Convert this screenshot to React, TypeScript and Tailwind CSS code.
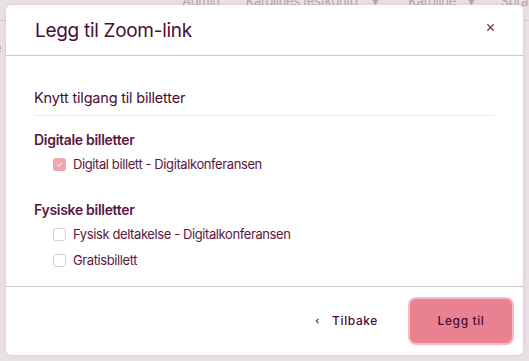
import React, { useState } from "react";

const font = { fontFamily: "Inter, 'Noto Sans', sans-serif" };

interface TicketOption {
  id: string;
  label: string;
}

const digital: TicketOption[] = [
  { id: "d1", label: "Digital billett - Digitalkonferansen" },
];

const physical: TicketOption[] = [
  { id: "p1", label: "Fysisk deltakelse - Digitalkonferansen" },
  { id: "p2", label: "Gratisbillett" },
];

const Check = ({ checked, onClick }: { checked: boolean; onClick: () => void }) => (
  <button
    onClick={onClick}
    className={
      checked
        ? "flex h-[13px] w-[13px] items-center justify-center rounded-[3px] bg-[#f3a3ad]"
        : "h-[13px] w-[13px] rounded-[3px] border border-[#d9cdd3] bg-white"
    }
  >
    {checked && (
      <svg viewBox="0 0 12 12" className="h-[9px] w-[9px]">
        <path d="M2.5 6.2 L5 8.5 L9.5 3.5" fill="none" stroke="white" strokeWidth="1.3" />
      </svg>
    )}
  </button>
);

const Group = ({
  title,
  items,
  selected,
  toggle,
}: {
  title: string;
  items: TicketOption[];
  selected: string[];
  toggle: (id: string) => void;
}) => (
  <div>
    <div className="text-[14px] font-semibold leading-[20px] tracking-[-0.3px] text-[#5a1840]">{title}</div>
    <div className="mt-[5px] flex flex-col gap-[6px] pl-[19px]">
      {items.map((t) => (
        <label key={t.id} className="flex h-[20px] items-center gap-[7px]">
          <Check checked={selected.includes(t.id)} onClick={() => toggle(t.id)} />
          <span className="text-[13px] tracking-[-0.4px] text-[#5a1840]">{t.label}</span>
        </label>
      ))}
    </div>
  </div>
);

export default function App() {
  const [selected, setSelected] = useState<string[]>(["d1"]);

  const toggle = (id: string) =>
    setSelected((s) => (s.includes(id) ? s.filter((x) => x !== id) : [...s, id]));

  return (
    <div className="relative h-[361px] w-[529px] overflow-hidden bg-[#e9e0e5]" style={font}>
      {/* faded page behind the modal */}
      <div className="flex h-[21px] items-start whitespace-nowrap border-b border-[#d8ccd2] pl-[182px] text-[13px] leading-[10px] tracking-[-0.3px] text-[#b7a5ae]">
        <span className="shrink-0 -translate-y-[4px]">Admin</span>
        <span className="ml-[26px] shrink-0 -translate-y-[4px]">Karolines testkonto</span>
        <span className="ml-[14px] shrink-0 -translate-y-[4px]">▾</span>
        <span className="ml-[30px] shrink-0 -translate-y-[4px]">Karoline</span>
        <span className="ml-[12px] shrink-0 -translate-y-[4px]">▾</span>
        <span className="ml-[26px] shrink-0 -translate-y-[4px]">Språk</span>
      </div>
      <div className="flex justify-between px-0 pt-[18px] text-[13px] text-[#b7a5ae]">
        <span className="-ml-[6px]">e</span>
        <span className="-mr-[6px]">l</span>
      </div>

      {/* modal */}
      <div className="absolute left-[6px] top-[5px] flex h-[350px] w-[517px] flex-col rounded-[5px] bg-white shadow-[0_0_3px_rgba(80,40,60,0.15)]">
        <div className="flex h-[51px] items-center justify-between border-b border-[#cfc7cb] pl-[29px] pr-[28px]">
          <h1 className="pt-[3px] text-[19px] tracking-[-0.3px] text-[#4a0d34]">Legg til Zoom-link</h1>
          <button className="mb-[6px] text-[#8a3a6a]">
            <svg viewBox="0 0 10 10" className="h-[9px] w-[9px]">
              <path d="M1.5 1.5 L8.5 8.5 M8.5 1.5 L1.5 8.5" stroke="currentColor" strokeWidth="1.6" />
            </svg>
          </button>
        </div>

        <div className="flex-1 px-[28px] pt-[31px]">
          <div className="border-b border-[#ecebeb] pb-[6px] text-[14.5px] tracking-[-0.2px] text-[#4a0d34]">
            Knytt tilgang til billetter
          </div>
          <div className="mt-[14px] flex flex-col gap-[25px]">
            <Group title="Digitale billetter" items={digital} selected={selected} toggle={toggle} />
            <Group title="Fysiske billetter" items={physical} selected={selected} toggle={toggle} />
          </div>
        </div>

        <div className="flex h-[69px] items-center justify-end gap-[32px] border-t border-[#cfc7cb] pr-[11px]">
          <button className="flex items-center gap-[12px] text-[12px] font-medium tracking-[0.6px] text-[#4a0d34]">
            <svg viewBox="0 0 6 8" className="h-[6px] w-[5px]">
              <path d="M4.5 1 L1.5 4 L4.5 7" fill="none" stroke="currentColor" strokeWidth="1.4" />
            </svg>
            Tilbake
          </button>
          <button className="h-[44px] w-[102px] rounded-[6px] bg-[#e98191] text-[12px] font-medium tracking-[0.6px] text-[#4a0d34] ring-2 ring-[#f8bac3]">
            Legg til
          </button>
        </div>
      </div>
    </div>
  );
}
